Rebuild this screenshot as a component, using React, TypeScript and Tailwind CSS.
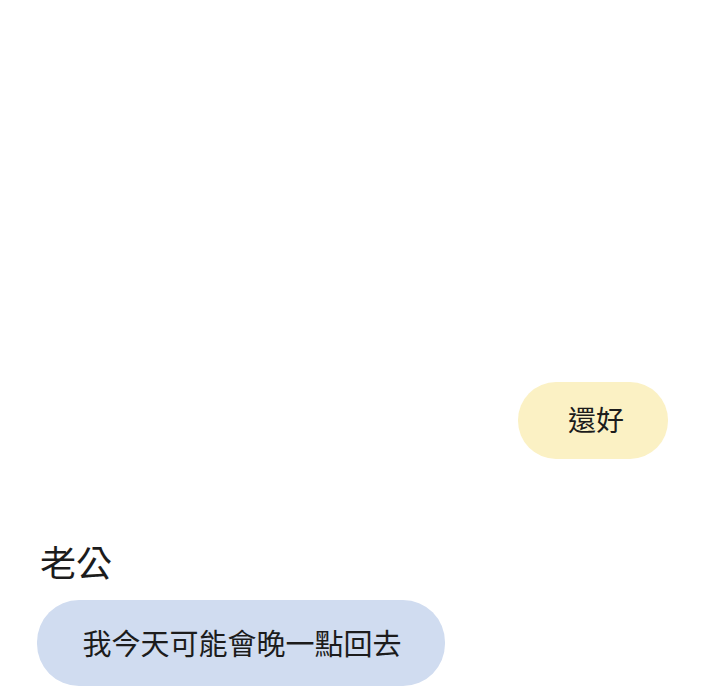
export default function App() {
  return (
    <div
      className="w-[720px] h-[700px] bg-white overflow-hidden flex flex-col text-[#1c1c1c]"
      style={{ fontFamily: '"Noto Sans CJK TC", "Noto Sans CJK SC", sans-serif' }}
    >
      <div className="pt-[382px] pr-[52px] flex justify-end">
        <div className="w-[150px] h-[77px] rounded-[38px] bg-[#fbf1c4] flex items-center justify-center text-[28px] leading-none pl-[6px] pb-[3px]">
          還好
        </div>
      </div>
      <div className="mt-[82px] pl-[40px] text-[36px] leading-[40px]">老公</div>
      <div className="mt-[19px] pl-[37px] flex">
        <div className="w-[408px] h-[86px] rounded-[42px] bg-[#d0dcf0] flex items-center justify-center text-[29px] leading-none pl-[2px] pb-[2px]">
          我今天可能會晚一點回去
        </div>
      </div>
    </div>
  );
}
